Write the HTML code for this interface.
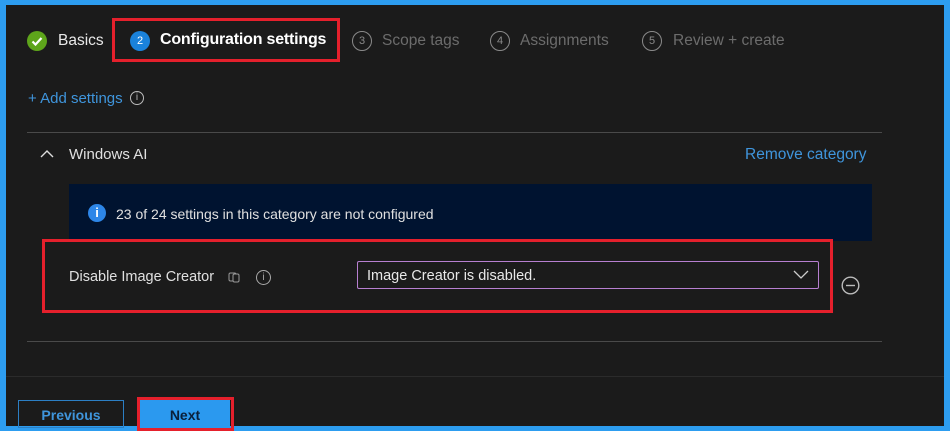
<!DOCTYPE html>
<html><head><style>
*{margin:0;padding:0;box-sizing:border-box}
body{width:950px;height:431px;background:#2d9df0;position:relative;overflow:hidden;font-family:"Liberation Sans",sans-serif}
#main{position:absolute;left:6px;top:5px;width:938px;height:421px;background:#1b1b1b}
.a{position:absolute;white-space:nowrap}
.circ{position:absolute;width:20px;height:20px;border-radius:50%;border:1px solid #8a8a8a;color:#8a8a8a;font-size:11px;text-align:center;line-height:18px}
.red{position:absolute;border:3px solid #e5202c}
.hr{position:absolute;height:1px;background:#4a4a4a}
</style></head><body>
<div id="main"></div>
<div class="a" style="left:27px;top:31px;width:20px;height:20px;border-radius:50%;background:#5ea51b"><svg width="20" height="20"><path d="M5.5 10.5l3 3 6-6.5" stroke="#fff" stroke-width="2.2" fill="none"/></svg></div>
<div class="a" style="left:58px;top:32px;font-size:15.5px;color:#e8e8e8">Basics</div>
<div class="red" style="left:112px;top:18px;width:228px;height:44px"></div>
<div class="a" style="left:130px;top:31px;width:20px;height:20px;border-radius:50%;background:#1a82db;color:#fff;font-size:11px;text-align:center;line-height:20px">2</div>
<div class="a" style="left:160px;top:31px;font-size:16px;color:#fff;font-weight:bold;letter-spacing:-0.2px">Configuration settings</div>
<div class="circ" style="left:352px;top:31px">3</div>
<div class="a" style="left:382px;top:32px;font-size:15.5px;color:#6c6c6c">Scope tags</div>
<div class="circ" style="left:490px;top:31px">4</div>
<div class="a" style="left:520px;top:32px;font-size:15.5px;color:#6c6c6c">Assignments</div>
<div class="circ" style="left:642px;top:31px">5</div>
<div class="a" style="left:673px;top:32px;font-size:15.5px;color:#6c6c6c">Review + create</div>
<div class="a" style="left:28px;top:90px;font-size:15px;color:#3f95dc">+ Add settings</div>
<div class="a" style="left:130px;top:91px;width:14px;height:14px;border-radius:50%;border:1px solid #bbb;color:#bbb;font-size:10px;text-align:center;line-height:12px">i</div>
<div class="hr" style="left:27px;top:132px;width:855px"></div>
<svg class="a" style="left:39px;top:148px" width="16" height="12"><path d="M2 9l6-6 6 6" stroke="#ddd" stroke-width="1.4" fill="none"/></svg>
<div class="a" style="left:69px;top:146px;font-size:15px;color:#e0e0e0">Windows AI</div>
<div class="a" style="left:745px;top:146px;font-size:15.5px;color:#3f95dc">Remove category</div>
<div class="a" style="left:69px;top:184px;width:803px;height:57px;background:#001330"></div>
<div class="a" style="left:88px;top:204px;width:18px;height:18px;border-radius:50%;background:#2d86e8;color:#fff;font-size:13px;font-weight:bold;text-align:center;line-height:18px">i</div>
<div class="a" style="left:116px;top:206px;font-size:14px;color:#e0e0e0">23 of 24 settings in this category are not configured</div>
<div class="red" style="left:42px;top:239px;width:791px;height:74px"></div>
<div class="a" style="left:69px;top:269px;font-size:14.5px;color:#e0e0e0">Disable Image Creator</div>
<svg class="a" style="left:226px;top:269px" width="16" height="16"><rect x="3" y="4" width="7" height="8" rx="1.5" stroke="#999" fill="none"/><rect x="7" y="5" width="6" height="8" rx="1.5" stroke="#999" fill="#1b1b1b"/></svg>
<div class="a" style="left:256px;top:270px;width:15px;height:15px;border-radius:50%;border:1px solid #aaa;color:#aaa;font-size:10px;text-align:center;line-height:13px">i</div>
<div class="a" style="left:357px;top:261px;width:462px;height:28px;border:1px solid #b77fd0;border-radius:2px"></div>
<div class="a" style="left:367px;top:268px;font-size:14.5px;color:#e8e8e8">Image Creator is disabled.</div>
<svg class="a" style="left:793px;top:269px" width="16" height="10"><path d="M1 2l7 7 7-7" stroke="#ccc" stroke-width="1.3" fill="none"/></svg>
<svg class="a" style="left:841px;top:276px" width="19" height="19"><circle cx="9.5" cy="9.5" r="8.3" stroke="#bbb" stroke-width="1.4" fill="none"/><path d="M5 9.5h9" stroke="#bbb" stroke-width="1.4"/></svg>
<div class="hr" style="left:27px;top:341px;width:855px"></div>
<div class="hr" style="left:6px;top:376px;width:938px;background:#2b2b2b"></div>
<div class="a" style="left:18px;top:400px;width:106px;height:28px;border:1px solid #2c7fc4;color:#3f95dc;font-size:14px;font-weight:bold;text-align:center;line-height:28px">Previous</div>
<div class="a" style="left:140px;top:400px;width:90px;height:28px;background:#2b99ef;color:#0a1f3a;font-size:14px;font-weight:bold;text-align:center;line-height:30px">Next</div>
<div class="red" style="left:137px;top:397px;width:97px;height:34px"></div>
</body></html>
